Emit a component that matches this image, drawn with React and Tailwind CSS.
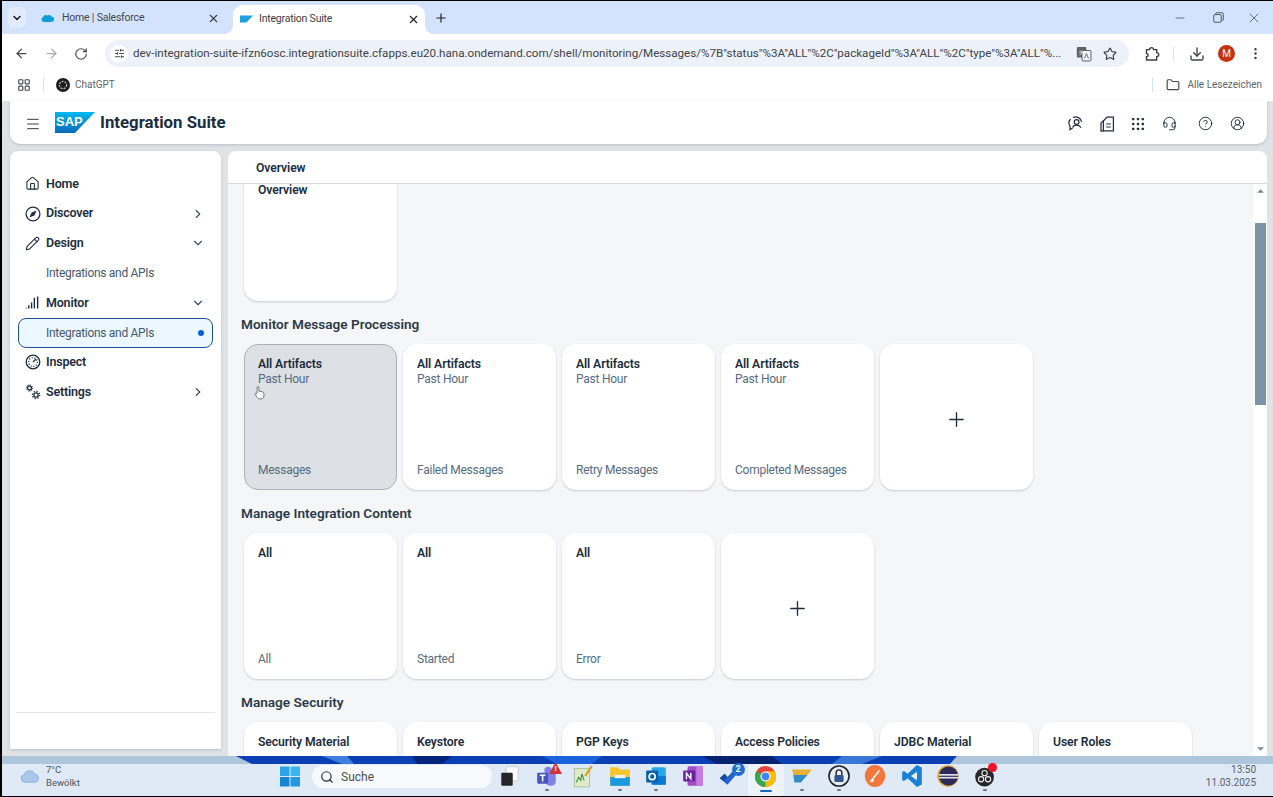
import React from "react";
import {
  ArrowLeft,
  ArrowRight,
  ChevronDown,
  ChevronRight,
  CircleHelp,
  CircleUserRound,
  Download,
  EllipsisVertical,
  Folder,
  Headset,
  House,
  LayoutGrid,
  Menu,
  Minus,
  Pencil,
  Plus,
  RotateCw,
  Search,
  SlidersHorizontal,
  Star,
  X,
} from "lucide-react";

const FONT = "font-['Roboto','Noto_Sans',sans-serif]";

function SapLogo() {
  return (
    <div className="relative w-[40px] h-[21px]">
      <svg viewBox="0 0 40 21" className="absolute inset-0 w-full h-full">
        <defs>
          <linearGradient id="sapg" x1="0" y1="0" x2="0" y2="1">
            <stop offset="0" stopColor="#00b8f1" />
            <stop offset="1" stopColor="#0a6ab8" />
          </linearGradient>
        </defs>
        <polygon points="0,0 40,0 20,21 0,21" fill="url(#sapg)" />
      </svg>
      <span className="absolute left-[1px] top-[2px] text-[13px] leading-[15px] font-bold text-white font-['Liberation_Sans',sans-serif]">
        SAP
      </span>
    </div>
  );
}

function SalesforceIcon() {
  return (
    <svg viewBox="0 0 16 12" className="w-[13px] h-[10px]">
      <path
        d="M3.5 11A3 3 0 0 1 2.6 5.2 3.4 3.4 0 0 1 8 3a3 3 0 0 1 4.6 1A3.5 3.5 0 0 1 12.5 11Z"
        fill="#0d9dda"
      />
    </svg>
  );
}

function ExtensionIcon() {
  return (
    <svg viewBox="0 0 16 16" className="w-[16px] h-[16px]" fill="none" stroke="#3c4043" strokeWidth="1.4">
      <path d="M2.5 3.6h3a2 2 0 0 1 4 0h3.2v3a2 2 0 0 1 0 4v3.4H2.5v-3.2a1.6 1.6 0 0 0 0-3.2Z" />
    </svg>
  );
}

function DiscoverIcon() {
  return (
    <svg viewBox="0 0 16 16" className="w-[16px] h-[16px]">
      <circle cx="8" cy="8" r="6.9" fill="none" stroke="#1d2d3e" strokeWidth="1.3" />
      <polygon points="11.6,4.4 9.4,9.4 4.4,11.6 6.6,6.6" fill="#1d2d3e" />
    </svg>
  );
}

function MonitorIcon() {
  return (
    <svg viewBox="0 0 16 16" className="w-[15px] h-[15px]" stroke="#1d2d3e" fill="none">
      <path d="M1.5 13.5v1M4 11v3.5M7 8v6.5M10 3v11.5M13.5 1.5v13" strokeWidth="1.5" />
    </svg>
  );
}

function InspectIcon() {
  return (
    <svg viewBox="0 0 16 16" className="w-[16px] h-[16px]" stroke="#1d2d3e" fill="none">
      <circle cx="8" cy="8" r="6.8" strokeWidth="1.3" />
      <circle cx="8" cy="8" r="4.4" strokeWidth="1.4" strokeDasharray="1 1.7" />
      <path d="M8 8l3-3" strokeWidth="1.3" />
    </svg>
  );
}

function SettingsIcon() {
  return (
    <svg viewBox="0 0 16 16" className="w-[16px] h-[16px]" stroke="#1d2d3e" fill="none">
      <circle cx="4.5" cy="4" r="2" strokeWidth="1.3" />
      <circle cx="4.5" cy="4" r="3.2" strokeWidth="1" strokeDasharray="1.2 1.3" />
      <circle cx="11" cy="11" r="2.2" strokeWidth="1.3" />
      <circle cx="11" cy="11" r="3.7" strokeWidth="1.2" strokeDasharray="1.3 1.6" />
    </svg>
  );
}

function BubbleUserIcon() {
  return (
    <svg viewBox="0 0 16 16" className="w-[16px] h-[16px]" stroke="#1d2d3e" fill="none" strokeWidth="1.2">
      <path d="M6 1.6A6 6 0 0 1 14.6 6M3.6 3A5.6 5.6 0 0 0 3 10v3.6L5.6 12" />
      <circle cx="9.6" cy="6" r="2.4" />
      <path d="M5.6 11.6c.8-1.8 2.2-2.4 4-2.4s3.2.6 4.4 2.4" />
    </svg>
  );
}

function NotebookIcon() {
  return (
    <svg viewBox="0 0 16 16" className="w-[16px] h-[16px]" stroke="#1d2d3e" fill="none" strokeWidth="1.2">
      <path d="M8 1.2h6.4v13.6H4.4V5Z" />
      <path d="M4.4 4.6 2 7v8l2.4-.2M7.2 8h4.6M7.2 11h4.6" />
    </svg>
  );
}

function DotsGridIcon() {
  const dots = [2.5, 8, 13.5];
  return (
    <svg viewBox="0 0 16 16" className="w-[14px] h-[14px]" fill="#1d2d3e">
      {dots.map((y) => dots.map((x) => <rect key={`${x}-${y}`} x={x - 1.3} y={y - 1.3} width="2.6" height="2.6" rx="0.6" />))}
    </svg>
  );
}

function TranslateIcon() {
  return (
    <svg viewBox="0 0 16 16" className="w-[16px] h-[16px]">
      <rect x="0.8" y="1" width="9.5" height="10.5" rx="1" fill="#5f6368" />
      <rect x="6" y="4.5" width="9" height="10.5" rx="1" fill="#f0f3f9" stroke="#5f6368" />
      <path d="M8.5 12.5l2-5 2 5" stroke="#5f6368" fill="none" strokeWidth="0.9" />
      <path d="M3 6h4M5 4.5v1M6.2 6c-.5 1.4-1.5 2.5-2.8 3" stroke="#fff" fill="none" strokeWidth="0.8" />
    </svg>
  );
}

function ChatGptIcon() {
  return (
    <svg viewBox="0 0 14 14" className="w-[14px] h-[14px]">
      <circle cx="7" cy="7" r="7" fill="#1e1e1e" />
      <circle cx="7" cy="7" r="3.6" fill="none" stroke="#b9b9b9" strokeWidth="1.2" strokeDasharray="2 1" />
    </svg>
  );
}

function CursorHand() {
  return (
    <svg viewBox="0 0 12 16" className="w-[11px] h-[16px]" fill="#ffffff" stroke="#4a4a4a" strokeWidth="0.8">
      <path d="M3.4 8.5V2a1 1 0 0 1 2 0v4l4 .8c1 .2 1.4.8 1.4 1.8v2.8c0 1.6-1 3-3 3H6.2c-1.2 0-2-.6-2.6-1.6L1.2 9.6c-.5-1 .8-1.8 1.4-.8Z" />
    </svg>
  );
}

/* ---- taskbar icons ---- */
function WindowsLogo() {
  return (
    <svg viewBox="0 0 20 20" className="w-[20px] h-[21px]">
      <rect x="0" y="0" width="9.5" height="9.5" fill="#2aa6e8" />
      <rect x="10.5" y="0" width="9.5" height="9.5" fill="#38b6f0" />
      <rect x="0" y="10.5" width="9.5" height="9.5" fill="#1585d4" />
      <rect x="10.5" y="10.5" width="9.5" height="9.5" fill="#1f99e2" />
    </svg>
  );
}

function WeatherCloud() {
  return (
    <svg viewBox="0 0 22 14" className="w-[21px] h-[14px]">
      <path d="M5 13.5A4 4 0 0 1 4.4 5.6 6 6 0 0 1 15.6 5a4.4 4.4 0 0 1 1 8.5Z" fill="#a9c7ea" stroke="#7ea3cf" strokeWidth="0.7" />
    </svg>
  );
}

function TaskIcon({ name }) {
  const cls = "w-[22px] h-[24px]";
  switch (name) {
    case "taskview":
      return (
        <svg viewBox="0 0 20 22" className={cls}>
          <rect x="6.5" y="2.5" width="11" height="13" rx="1" fill="#fbfbfb" stroke="#c4c8cc" strokeWidth="0.8" />
          <rect x="2" y="8" width="10.5" height="12" rx="1" fill="#262626" />
        </svg>
      );
    case "teams":
      return (
        <svg viewBox="0 0 20 22" className={cls}>
          <circle cx="11" cy="6" r="3.4" fill="#7b83eb" />
          <path d="M9 9h9v7a4 4 0 0 1-4 4h-1a4 4 0 0 1-4-4Z" fill="#7b83eb" />
          <rect x="1" y="8" width="10" height="10" rx="1" fill="#4b53bc" />
          <path d="M3.4 10.4h5.2M6 10.4v5.6" stroke="#fff" strokeWidth="1.4" />
        </svg>
      );
    case "chart":
      return (
        <svg viewBox="0 0 20 22" className={cls}>
          <rect x="2" y="4" width="14" height="17" fill="#dfeccc" stroke="#9ab07a" strokeWidth="0.6" />
          <path d="M4 17l2-5 2 3 1-6 2 6" fill="none" stroke="#3e8e41" strokeWidth="1" />
          <path d="M12 11 18 2" stroke="#d8a31a" strokeWidth="2" />
        </svg>
      );
    case "folder":
      return (
        <svg viewBox="0 0 20 22" className={cls}>
          <path d="M1 3h7l2 2h9v15H1Z" fill="#f7c62f" />
          <rect x="1" y="12" width="18" height="8" fill="#1c9ae0" />
          <rect x="5" y="10" width="10" height="3" fill="#f1f1f1" />
        </svg>
      );
    case "outlook":
      return (
        <svg viewBox="0 0 20 22" className={cls}>
          <rect x="6" y="3" width="13" height="16" rx="1.5" fill="#28a8ea" />
          <rect x="6" y="11" width="13" height="8" fill="#0f78d4" />
          <rect x="1" y="6" width="11" height="11" rx="1" fill="#0a5fab" />
          <circle cx="6.5" cy="11.5" r="2.8" fill="none" stroke="#fff" strokeWidth="1.5" />
        </svg>
      );
    case "onenote":
      return (
        <svg viewBox="0 0 20 22" className={cls}>
          <rect x="5" y="2" width="14" height="18" rx="1.5" fill="#a14fc7" />
          <rect x="13" y="2" width="6" height="18" fill="#c47ce0" />
          <rect x="1" y="6" width="11" height="10" rx="1" fill="#6a1f9c" />
          <path d="M4 14V8.4l4 5.2V8" fill="none" stroke="#fff" strokeWidth="1.3" />
        </svg>
      );
    case "todo":
      return (
        <svg viewBox="0 0 20 22" className={cls}>
          <path d="M1.5 13 6 9l2.5 3L16 4l3 3-10.5 12Z" fill="#2564cf" />
          <path d="M6 9l2.5 3-3 3.5-4-2.5Z" fill="#1a47a0" />
        </svg>
      );
    case "chrome":
      return (
        <svg viewBox="0 0 20 20" className="w-[21px] h-[21px]">
          <circle cx="10" cy="10" r="10" fill="#ea4335" />
          <path d="M10 10 1.3 5A10 10 0 0 0 10 20l5-8.6Z" fill="#34a853" />
          <path d="M10 20A10 10 0 0 0 18.7 5H10l0 5Z" fill="#fbbc04" />
          <circle cx="10" cy="10" r="4.8" fill="#fff" />
          <circle cx="10" cy="10" r="3.7" fill="#4285f4" />
        </svg>
      );
    case "sap":
      return (
        <svg viewBox="0 0 20 22" className={cls}>
          <polygon points="1,5 19,5 15,10 2,10" fill="#e8b032" />
          <polygon points="2,10 15,10 9,17 3,17" fill="#2f8fc4" />
        </svg>
      );
    case "lock":
      return (
        <svg viewBox="0 0 20 22" className={cls}>
          <circle cx="10" cy="11" r="9.2" fill="#e9edf3" stroke="#20242c" strokeWidth="1.5" />
          <rect x="5.8" y="10" width="8.4" height="6.5" rx="1" fill="#31558f" />
          <path d="M7.4 10V8a2.6 2.6 0 0 1 5.2 0v2" fill="none" stroke="#20242c" strokeWidth="1.3" />
        </svg>
      );
    case "postman":
      return (
        <svg viewBox="0 0 20 22" className={cls}>
          <ellipse cx="10" cy="11" rx="9.4" ry="10" fill="#f3763a" />
          <path d="M6 16 14 6M6 16l3-1" stroke="#fff" strokeWidth="1.5" fill="none" />
        </svg>
      );
    case "vscode":
      return (
        <svg viewBox="0 0 20 22" className={cls}>
          <path d="M14.5 1 19 3.2v15.6L14.5 21 6 13 2.6 15.6 1 14.6V7.4l1.6-1L6 9Z" fill="#1b81d4" />
          <path d="M14.5 7 9 11l5.5 4Z" fill="#e8f3fc" />
        </svg>
      );
    case "eclipse":
      return (
        <svg viewBox="0 0 20 22" className={cls}>
          <circle cx="10" cy="11" r="9.8" fill="#e39b2e" />
          <circle cx="10.5" cy="11" r="8.8" fill="#2a2a58" />
          <rect x="1.7" y="9.2" width="17.6" height="1.5" fill="#e5e5ee" />
          <rect x="1.7" y="11.8" width="17.6" height="1.5" fill="#e5e5ee" />
        </svg>
      );
    case "obs":
      return (
        <svg viewBox="0 0 20 22" className={cls}>
          <circle cx="9.6" cy="12" r="8.6" fill="#26262a" />
          <circle cx="9.6" cy="8.4" r="2.4" fill="none" stroke="#eee" strokeWidth="1" />
          <circle cx="6.4" cy="14" r="2.4" fill="none" stroke="#eee" strokeWidth="1" />
          <circle cx="12.8" cy="14" r="2.4" fill="none" stroke="#eee" strokeWidth="1" />
        </svg>
      );
    default:
      return null;
  }
}

const TASK_ITEMS = [
  { name: "taskview" },
  { name: "teams", running: true, alert: true },
  { name: "chart" },
  { name: "folder", running: true },
  { name: "outlook", running: true },
  { name: "onenote" },
  { name: "todo", count: "2" },
  { name: "chrome", active: true },
  { name: "sap", running: true },
  { name: "lock", running: true },
  { name: "postman" },
  { name: "vscode" },
  { name: "eclipse" },
  { name: "obs", running: true, dot: true },
];

function TaskItem({ item }) {
  return (
    <div className={`relative w-[36.5px] h-[32px] pb-[8px] flex items-center justify-center ${item.active ? "bg-[#eef3fb] rounded-[4px]" : ""}`}>
      <TaskIcon name={item.name} />
      {item.running && <span className="absolute bottom-[5px] left-1/2 -ml-[2px] w-[4px] h-[2px] rounded-full bg-[#6f7681]" />}
      {item.active && <span className="absolute bottom-[4px] left-1/2 -ml-[6px] w-[12px] h-[2px] rounded-full bg-[#0f6cbd]" />}
      {item.alert && (
        <span className="absolute -top-[2px] right-[3px] w-[13px] h-[12px] bg-[#d13438] [clip-path:polygon(50%_0,100%_100%,0_100%)] text-white text-[8px] leading-[13px] font-bold text-center">!</span>
      )}
      {item.count && (
        <span className="absolute -top-[1px] right-[3px] w-[13px] h-[13px] rounded-full bg-[#1f6fd0] text-white text-[9px] leading-[13px] font-bold text-center">{item.count}</span>
      )}
      {item.dot && <span className="absolute -top-[1px] right-[6px] w-[9px] h-[9px] rounded-full bg-[#f0112b]" />}
    </div>
  );
}

function NavItem({ icon, label, chevron, sub, selected }) {
  return (
    <div
      className={`h-[29.75px] mx-[8px] flex items-center shrink-0 rounded-[8px] ${
        selected ? "pl-[27px] pr-[8px] border border-[#1f4f9c] bg-[#ebf8ff]" : sub ? "pl-[28px] pr-[8px]" : "pl-[7px] pr-[8px]"
      }`}
    >
      {!sub && <span className="w-[21px] shrink-0 flex items-center">{icon}</span>}
      <span className={sub ? "text-[12px] tracking-[-0.3px] text-[#46596d]" : "text-[12.5px] tracking-[-0.2px] font-semibold text-[#1d2d3e]"}>{label}</span>
      {chevron === "right" && <ChevronRight size={14} className="ml-auto text-[#3d4f63]" />}
      {chevron === "down" && <ChevronDown size={14} className="ml-auto text-[#3d4f63]" />}
      {selected && <span className="ml-auto w-[6px] h-[6px] rounded-full bg-[#0a5fd6]" />}
    </div>
  );
}

function Tile({ title, sub, footer, hover, children }) {
  return (
    <div
      className={`relative w-[153px] h-[146px] shrink-0 rounded-[14px] flex flex-col ${
        hover ? "bg-[#dde1e5] border border-[#a9b1b9] px-[13px] pt-[12px]" : "bg-white shadow-[0_1px_2px_rgba(85,107,130,0.3)] px-[14px] pt-[13px]"
      }`}
    >
      {title && <div className="text-[12.2px] tracking-[-0.1px] leading-[15px] font-semibold text-[#1d2d3e]">{title}</div>}
      {sub && <div className="text-[12px] tracking-[-0.25px] leading-[14px] text-[#556b82]">{sub}</div>}
      {footer && (
        <div className={`mt-auto whitespace-nowrap text-[12px] tracking-[-0.25px] leading-[16px] text-[#556b82] ${hover ? "mb-[11px]" : "mb-[12px]"}`}>
          {footer}
        </div>
      )}
      {children}
    </div>
  );
}

function AddTile() {
  return (
    <div className="w-[153px] h-[146px] shrink-0 rounded-[14px] bg-white shadow-[0_1px_2px_rgba(85,107,130,0.3)] pt-[4px] flex items-center justify-center">
      <Plus size={23} strokeWidth={1.4} className="text-[#1d2d3e]" />
    </div>
  );
}

function SectionTitle({ children }) {
  return (
    <div className="h-[43px] shrink-0 pt-[3px] -ml-[3px] flex items-center text-[13.6px] font-semibold text-[#2b3a4a]">
      {children}
    </div>
  );
}

export default function App() {
  return (
    <div className={`${FONT} w-[1273px] h-[797px] overflow-hidden flex flex-col bg-black border-t border-b border-l-2 border-black`}>
      {/* Tab strip */}
      <div className="h-[33px] shrink-0 bg-[#d3e3fd] flex items-end">
        <div className="self-start mt-[6px] ml-[6px] w-[18px] h-[21px] rounded-[6px] bg-[#e1ebfc] flex items-center justify-center">
          <ChevronDown size={12} strokeWidth={3} className="text-[#1f1f1f]" />
        </div>
        <div className="ml-[8px] w-[199px] h-[33px] pl-[7px] pr-[13px] pt-[1px] flex items-center">
          <span className="mr-[8px] flex"><SalesforceIcon /></span>
          <span className="text-[10.5px] tracking-[-0.2px] text-[#45474a]">Home | Salesforce</span>
          <X size={13} className="ml-auto text-[#3c4043]" />
        </div>
        <div className="relative w-[192px] h-[29px] bg-white rounded-t-[10px] pl-[7px] pr-[5px] pb-[1px] flex items-center">
          <span className="absolute -left-[8px] bottom-0 w-[8px] h-[8px] bg-[radial-gradient(circle_at_0_0,#d3e3fd_7.5px,#ffffff_8px)]" />
          <span className="absolute -right-[8px] bottom-0 w-[8px] h-[8px] bg-[radial-gradient(circle_at_100%_0,#d3e3fd_7.5px,#ffffff_8px)]" />
          <svg viewBox="0 0 40 21" className="w-[13px] h-[8px] mr-[6px]"><polygon points="0,0 40,0 20,21 0,21" fill="#1f9fdc" /></svg>
          <span className="text-[10.5px] tracking-[-0.2px] text-[#3c4043]">Integration Suite</span>
          <X size={13} className="ml-auto text-[#1f1f1f]" />
        </div>
        <Plus size={14} className="self-center ml-[9px] mt-[1px] text-[#1f1f1f]" />
        <div className="ml-auto self-center flex items-center pr-[11px] text-[#3c4043]">
          <Minus size={14} strokeWidth={1.2} />
          <svg viewBox="0 0 12 12" className="ml-[26px] w-[11px] h-[11px]" fill="none" stroke="currentColor" strokeWidth="0.9">
            <rect x="0.8" y="2.8" width="8.2" height="8.4" rx="1.5" />
            <path d="M3 2.6V2a1.2 1.2 0 0 1 1.2-1.2h5.6A1.4 1.4 0 0 1 11.2 2.2v6a1.2 1.2 0 0 1-1.2 1.2" />
          </svg>
          <X size={16} strokeWidth={1.1} className="ml-[22px]" />
        </div>
      </div>

      {/* Toolbar */}
      <div className="h-[34px] shrink-0 bg-white flex items-center pt-[5px] pl-[12px] pr-[8px]">
        <ArrowLeft size={15} className="text-[#474747]" />
        <ArrowRight size={15} className="ml-[15px] text-[#a9abad]" />
        <RotateCw size={14} className="ml-[15px] text-[#474747]" />
        <div className="ml-[17px] w-[1024px] h-[27px] rounded-full bg-[#edf2fa] flex items-center pl-[5px]">
          <span className="w-[18px] h-[18px] rounded-full bg-white flex items-center justify-center">
            <SlidersHorizontal size={11} className="text-[#3c4043]" />
          </span>
          <span className="ml-[5px] w-[931px] whitespace-nowrap text-[11.6px] text-[#3f4246]">
            dev-integration-suite-ifzn6osc.integrationsuite.cfapps.eu20.hana.ondemand.com/shell/monitoring/Messages/%7B"status"%3A"ALL"%2C"packageId"%3A"ALL"%2C"type"%3A"ALL"%...
          </span>
          <span className="ml-[12px] flex"><TranslateIcon /></span>
          <Star size={14} className="ml-[11px] text-[#3c4043]" />
        </div>
        <span className="ml-[15px] flex"><ExtensionIcon /></span>
        <span className="ml-[13px] w-px h-[14px] bg-[#d3e3fd]" />
        <Download size={16} className="ml-[15px] text-[#3c4043]" />
        <span className="ml-[13px] w-[17px] h-[17px] rounded-full bg-[#c5320d] text-white text-[10px] leading-[17px] text-center">M</span>
        <EllipsisVertical size={15} className="ml-[13px] text-[#3c4043]" />
      </div>

      {/* Bookmarks */}
      <div className="h-[33px] shrink-0 bg-white flex items-center pl-[15px] pr-[11px]">
        <LayoutGrid size={14} className="text-[#4a4d51]" />
        <span className="ml-[12px] w-px h-[15px] bg-[#d3e3fd]" />
        <span className="ml-[12px] flex"><ChatGptIcon /></span>
        <span className="ml-[5px] text-[10px] text-[#5f6368]">ChatGPT</span>
        <span className="ml-auto w-px h-[15px] bg-[#d3e3fd]" />
        <Folder size={14} className="ml-[13px] text-[#474747]" />
        <span className="ml-[7px] text-[10px] text-[#5f6368]">Alle Lesezeichen</span>
      </div>

      {/* App area */}
      <div className="flex-1 min-h-0 bg-[#dfe3e6] pl-[8px] pr-[6px] flex flex-col">
        <header className="h-[43px] shrink-0 bg-white rounded-b-[10px] shadow-[0_1px_3px_rgba(85,107,130,0.3)] flex items-center pl-[15px] pr-[22px]">
          <Menu size={16} strokeWidth={1.4} className="mt-[2px] text-[#1d2d3e]" />
          <span className="ml-[14px]"><SapLogo /></span>
          <span className="ml-[5px] text-[16.8px] font-bold text-[#1d2d3e]">Integration Suite</span>
          <div className="ml-auto mt-[2px] flex items-center text-[#1d2d3e]">
            <BubbleUserIcon />
            <span className="ml-[16px] flex"><NotebookIcon /></span>
            <span className="ml-[16px] flex"><DotsGridIcon /></span>
            <Headset size={15} strokeWidth={1.5} className="ml-[17px]" />
            <CircleHelp size={15} strokeWidth={1.5} className="ml-[21px]" />
            <CircleUserRound size={15} strokeWidth={1.5} className="ml-[17px]" />
          </div>
        </header>

        <div className="mt-[7px] flex-1 min-h-0 flex gap-[7px]">
          {/* Sidebar */}
          <aside className="w-[211px] h-[598px] shrink-0 bg-white rounded-t-[8px] shadow-[0_1px_3px_rgba(85,107,130,0.3)] pt-[18px] flex flex-col">
            <NavItem icon={<House size={15} strokeWidth={1.7} className="text-[#1d2d3e]" />} label="Home" />
            <NavItem icon={<DiscoverIcon />} label="Discover" chevron="right" />
            <NavItem icon={<Pencil size={15} strokeWidth={1.7} className="text-[#1d2d3e]" />} label="Design" chevron="down" />
            <NavItem label="Integrations and APIs" sub />
            <NavItem icon={<MonitorIcon />} label="Monitor" chevron="down" />
            <NavItem label="Integrations and APIs" sub selected />
            <NavItem icon={<InspectIcon />} label="Inspect" />
            <NavItem icon={<SettingsIcon />} label="Settings" chevron="right" />
            <div className="mt-auto mb-[36px] mx-[6px] h-px bg-[#e5e5e5]" />
          </aside>

          {/* Main */}
          <main className="flex-1 min-w-0 bg-white rounded-t-[8px] flex flex-col overflow-hidden">
            <div className="h-[33px] shrink-0 border-b border-[#d5d8db] pl-[28px] pt-[2px] flex items-center text-[12.2px] tracking-[-0.1px] font-semibold text-[#1d2d3e]">
              Overview
            </div>
            <div className="flex-1 min-h-0 flex">
              <div className="flex-1 min-w-0 bg-[#f5f6f7] overflow-hidden pl-[16px] flex flex-col">
                <div className="w-[153px] h-[117px] shrink-0 rounded-b-[14px] bg-white shadow-[0_1px_2px_rgba(85,107,130,0.3)] px-[14px]">
                  <div className="text-[12.2px] tracking-[-0.1px] leading-[12px] font-semibold text-[#1d2d3e]">Overview</div>
                </div>

                <SectionTitle>Monitor Message Processing</SectionTitle>
                <div className="flex gap-[6px] shrink-0">
                  <Tile title="All Artifacts" sub="Past Hour" footer="Messages" hover>
                    <span className="absolute left-[9px] top-[40px] flex"><CursorHand /></span>
                  </Tile>
                  <Tile title="All Artifacts" sub="Past Hour" footer="Failed Messages" />
                  <Tile title="All Artifacts" sub="Past Hour" footer="Retry Messages" />
                  <Tile title="All Artifacts" sub="Past Hour" footer="Completed Messages" />
                  <AddTile />
                </div>

                <SectionTitle>Manage Integration Content</SectionTitle>
                <div className="flex gap-[6px] shrink-0">
                  <Tile title="All" footer="All" />
                  <Tile title="All" footer="Started" />
                  <Tile title="All" footer="Error" />
                  <AddTile />
                </div>

                <SectionTitle>Manage Security</SectionTitle>
                <div className="flex gap-[6px] shrink-0">
                  <Tile title="Security Material" />
                  <Tile title="Keystore" />
                  <Tile title="PGP Keys" />
                  <Tile title="Access Policies" />
                  <Tile title="JDBC Material" />
                  <Tile title="User Roles" />
                </div>
              </div>

              {/* Scrollbar */}
              <div className="w-[14px] shrink-0 bg-white pt-[5px] pb-[5px] flex flex-col items-center">
                <svg viewBox="0 0 8 4" className="w-[7px] h-[4px]"><polygon points="4,0 8,4 0,4" fill="#7d8a98" /></svg>
                <div className="mt-[30px] w-[11px] h-[182px] bg-[#7d93a8]" />
                <svg viewBox="0 0 8 4" className="mt-auto w-[7px] h-[4px]"><polygon points="0,0 8,0 4,4" fill="#7d8a98" /></svg>
              </div>
            </div>
          </main>
        </div>
      </div>

      {/* Wallpaper strip behind the taskbar */}
      <svg viewBox="0 0 1271 8" preserveAspectRatio="none" className="block w-full h-[8px] shrink-0">
        <rect width="1271" height="8" fill="#aec6dc" />
        <polygon points="234,0 955,0 948,8 250,8" fill="#0b3fb4" />
        <polygon points="320,0 345,0 352,8 340,8" fill="#3f7fe0" />
        <polygon points="410,0 450,0 440,8 415,8" fill="#06237c" />
        <polygon points="540,0 600,0 590,8 555,8" fill="#1b63dc" />
        <polygon points="700,0 770,0 780,8 715,8" fill="#07226e" />
        <polygon points="840,0 880,0 860,8 830,8" fill="#3a78d8" />
      </svg>

      {/* Taskbar */}
      <div className="h-[32px] shrink-0 bg-[#dfeaf6] flex items-center pl-[18px]">
        <div className="w-[260px] mb-[8px] shrink-0 flex items-center">
          <WeatherCloud />
          <div className="ml-[5px] text-[9.5px] leading-[13px] text-[#4b5561]">
            <div>7°C</div>
            <div>Bewölkt</div>
          </div>
        </div>
        <span className="mb-[8px] flex"><WindowsLogo /></span>
        <div className="ml-[12px] mb-[7px] w-[180px] h-[23px] shrink-0 rounded-full bg-[#f7fafd] flex items-center pl-[8px]">
          <Search size={14} className="text-[#2b2b2b]" />
          <span className="ml-[7px] text-[12px] text-[#4d4d4d]">Suche</span>
        </div>
        <div className="ml-[0px] flex">
          {TASK_ITEMS.map((item) => (
            <TaskItem key={item.name} item={item} />
          ))}
        </div>
        <div className="ml-auto mb-[8px] pr-[17px] text-right text-[10px] leading-[13px] text-[#5a626c]">
          <div>13:50</div>
          <div>11.03.2025</div>
        </div>
      </div>
    </div>
  );
}
